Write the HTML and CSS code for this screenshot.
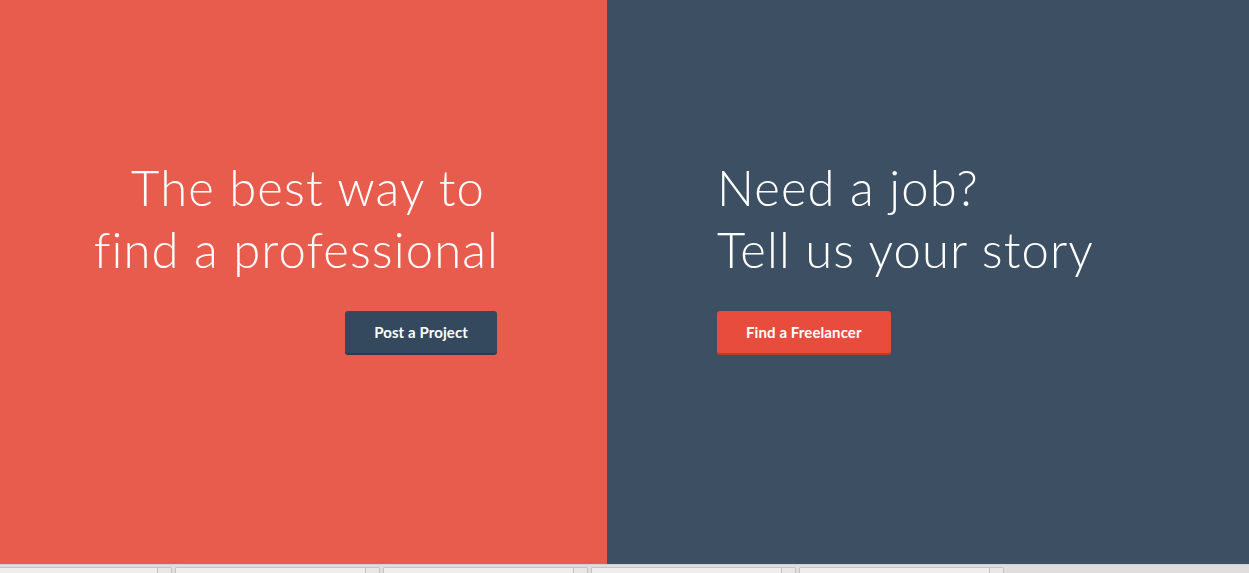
FILE: index.html
```html
<!DOCTYPE html>
<html>
<head>
<meta charset="utf-8">
<link rel="stylesheet" href="styles.css">
</head>
<body>
<main class="split">
  <section class="panel panel-left">
    <h1 class="headline headline-right"><span class="line-gap">The best way to</span><br>find a professional</h1>
    <a class="btn btn-dark" href="#">Post a Project</a>
  </section>
  <section class="panel panel-right">
    <h1 class="headline">Need a job?<br>Tell us your story</h1>
    <a class="btn btn-red" href="#">Find a Freelancer</a>
  </section>
</main>
<footer class="selects">
  <div class="sel"><span class="sel-main"></span><span class="sel-btn"></span></div>
  <div class="sel"><span class="sel-main"></span><span class="sel-btn"></span></div>
  <div class="sel"><span class="sel-main"></span><span class="sel-btn"></span></div>
  <div class="sel"><span class="sel-main"></span><span class="sel-btn"></span></div>
  <div class="sel"><span class="sel-main"></span><span class="sel-btn"></span></div>
</footer>
</body>
</html>
```
FILE: styles.css
```css
html, body {
  margin: 0;
  padding: 0;
  overflow: hidden;
  background: #dedede;
}
body {
  width: 1249px;
  height: 573px;
  font-family: "Lato", "Open Sans", sans-serif;
}
.split {
  display: flex;
  height: 564px;
}
.panel {
  box-sizing: border-box;
  padding-top: 156px;
  display: flex;
  flex-direction: column;
}
.panel-left {
  width: 607px;
  background: #e75c4d;
  padding-right: 110px;
  align-items: flex-end;
  text-align: right;
}
.panel-right {
  flex: 1;
  background: #3d4f62;
  padding-left: 110px;
  align-items: flex-start;
  text-align: left;
}
.headline {
  margin: 0 0 31px 0;
  color: #ffffff;
  font-weight: 300;
  font-size: 49px;
  line-height: 62px;
  letter-spacing: 1.1px;
}
.headline-right {
  margin-right: -2px;
}
.line-gap {
  padding-right: 14px;
}
.btn {
  display: inline-block;
  box-sizing: border-box;
  height: 44px;
  line-height: 42px;
  padding: 0 29px;
  border-radius: 3px;
  color: #ffffff;
  text-decoration: none;
  font-size: 15px;
  font-weight: 700;
  letter-spacing: 0.1px;
}
.btn-dark {
  background: #34495e;
  border-bottom: 2px solid #2a3b4c;
}
.btn-red {
  background: #e74c3c;
  border-bottom: 2px solid #c0392b;
}
.selects {
  display: flex;
  gap: 3px;
  height: 9px;
  padding-top: 2px;
  box-sizing: border-box;
  margin-left: -33px;
  background: #dedede;
  border-top: 1px solid #d2d2d2;
  overflow: hidden;
}
.sel {
  display: flex;
  flex: none;
}
.sel-main {
  width: 189px;
  height: 8px;
  border: 1px solid #c4c4c4;
  border-bottom: none;
  border-radius: 2px 0 0 0;
  background: #eeeeee;
}
.sel-btn {
  width: 13px;
  height: 8px;
  border: 1px solid #c4c4c4;
  border-left: none;
  border-bottom: none;
  border-radius: 0 2px 0 0;
  background: #e8e8e8;
}
```
